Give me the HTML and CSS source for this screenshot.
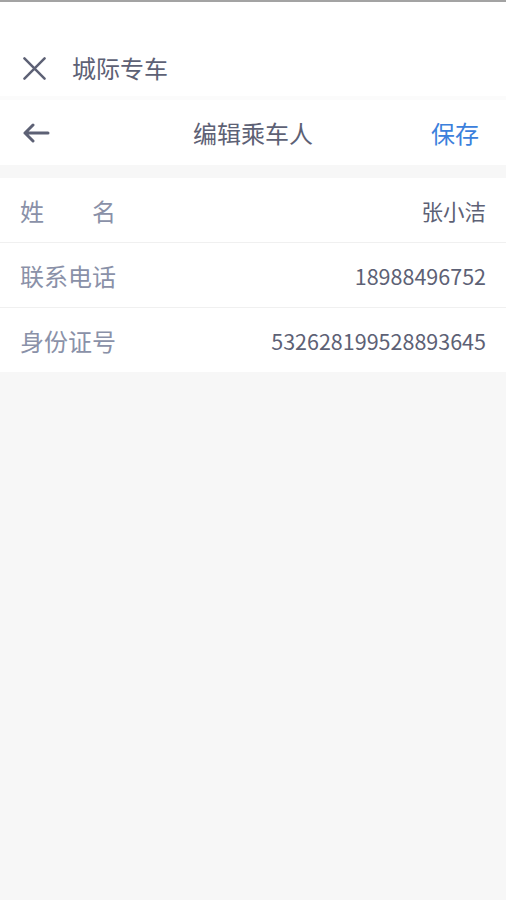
FILE: index.html
```html
<!DOCTYPE html>
<html lang="zh">
<head>
<meta charset="utf-8">
<title>编辑乘车人</title>
<link rel="stylesheet" href="styles.css">
</head>
<body>
<div class="page">
  <header class="topbar">
    <svg class="icon-close" viewBox="0 0 24 24" width="24" height="24">
      <path d="M1.5 1.5 L22.5 22.5 M22.5 1.5 L1.5 22.5" stroke="#5d6175" stroke-width="2.6" stroke-linecap="round" fill="none"/>
    </svg>
    <span class="topbar-title">城际专车</span>
  </header>
  <nav class="navbar">
    <svg class="icon-back" viewBox="0 0 28 20" width="28" height="20">
      <path d="M26 10 H3 M11 2 L3 10 L11 18" stroke="#5d6175" stroke-width="3" stroke-linecap="round" stroke-linejoin="round" fill="none"/>
    </svg>
    <span class="nav-title">编辑乘车人</span>
    <span class="nav-save">保存</span>
  </nav>
  <section class="form">
    <div class="row">
      <span class="label label-name"><span>姓</span><span>名</span></span>
      <span class="value">张小洁</span>
    </div>
    <div class="row">
      <span class="label">联系电话</span>
      <span class="value">18988496752</span>
    </div>
    <div class="row">
      <span class="label">身份证号</span>
      <span class="value">532628199528893645</span>
    </div>
  </section>
</div>
</body>
</html>
```
FILE: styles.css
```css
html, body {
  margin: 0;
  padding: 0;
  background: #f7f7f7;
  font-family: "Noto Sans CJK SC", "Noto Sans", sans-serif;
}
.page {
  width: 506px;
  min-height: 900px;
  background: #f7f7f7;
}
.topbar {
  box-sizing: content-box;
  height: 56px;
  padding: 38px 0 0 23px;
  border-top: 2px solid #a3a3a3;
  border-bottom: 4px solid #fbfbfb;
  background: #ffffff;
  display: flex;
  align-items: center;
}
.icon-close {
  display: block;
  width: 23px;
  height: 23px;
}
.topbar-title {
  margin-left: 26px;
  font-size: 24px;
  color: #5d6175;
  line-height: 1;
}
.navbar {
  height: 65px;
  background: #ffffff;
  display: flex;
  align-items: center;
  position: relative;
  padding: 0 27px 0 22px;
}
.icon-back {
  display: block;
  width: 28px;
  height: 20px;
}
.nav-title {
  position: absolute;
  left: 0;
  right: 0;
  text-align: center;
  font-size: 24px;
  color: #5d6175;
  pointer-events: none;
}
.nav-save {
  margin-left: auto;
  font-size: 24px;
  color: #3b80dc;
}
.form {
  margin-top: 13px;
  background: #ffffff;
}
.row {
  height: 64px;
  display: flex;
  align-items: center;
  justify-content: space-between;
  padding: 0 20px;
  border-bottom: 1px solid #f0f0f0;
}
.row:last-child {
  border-bottom: none;
}
.label {
  font-size: 24px;
  color: #8a91a8;
}
.label-name {
  display: flex;
  justify-content: space-between;
  width: 96px;
}
.value {
  font-size: 21.5px;
  color: #5d6175;
}
```
